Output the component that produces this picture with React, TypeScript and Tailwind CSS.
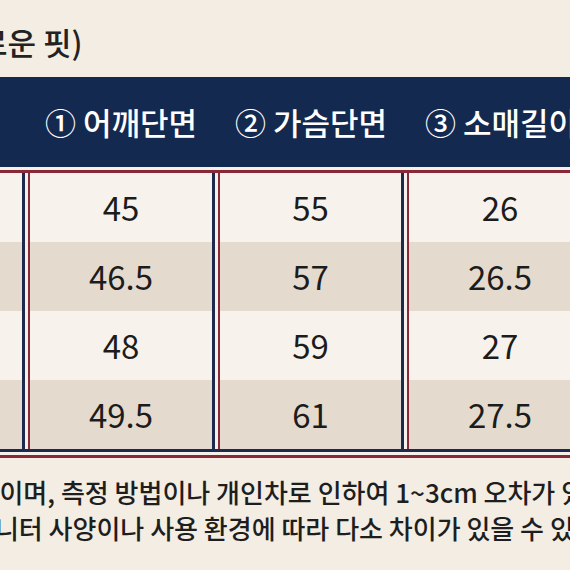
const font = { fontFamily: '"Noto Sans CJK KR", "Noto Sans", sans-serif' };

const columns = [
  { label: "① 어깨단면", values: ["45", "46.5", "48", "49.5"] },
  { label: "② 가슴단면", values: ["55", "57", "59", "61"] },
  { label: "③ 소매길이", values: ["26", "26.5", "27", "27.5"] },
];

function Separator() {
  return (
    <div className="flex h-full shrink-0">
      <div className="w-[3px] bg-[#1d2a4d]" />
      <div className="w-[3px] bg-[#f6f0ea]" />
      <div className="w-[2px] bg-[#8a2838]" />
    </div>
  );
}

function Column({ values, width }: { values: string[]; width: string }) {
  return (
    <div className={`flex flex-col shrink-0 ${width}`}>
      {values.map((v, i) => (
        <div
          key={i}
          className={`h-[69px] flex items-center justify-center text-[33px] text-[#1c1c1c] ${
            i % 2 === 0 ? "bg-[#f7f3ec]" : "bg-[#e4dbce]"
          }`}
        >
          {v}
        </div>
      ))}
    </div>
  );
}

export default function App() {
  const blank = ["", "", "", ""];
  return (
    <div className="w-[570px] h-[570px] overflow-hidden bg-[#f3ede3]" style={font}>
      <div className="h-[77px] pt-[18px] whitespace-nowrap leading-[48px]">
        <p className="ml-[-89px] text-[31px] font-medium text-[#222]">(여유로운 핏)</p>
      </div>

      <div className="h-[90px] bg-[#14294f] flex items-center whitespace-nowrap text-white text-[31px] font-medium">
        <div className="w-[30px] shrink-0" />
        {columns.map((c, i) => (
          <div key={i} className="flex shrink-0">
            <div className="w-[182px] text-center">{c.label}</div>
            <div className="w-[8px]" />
          </div>
        ))}
      </div>

      <div className="h-[3px] bg-[#f6f0ea]" />
      <div className="h-[3px] bg-[#8a2838]" />

      <div className="flex h-[276px] overflow-hidden">
        <Column values={blank} width="w-[22px]" />
        <Separator />
        <Column values={columns[0].values} width="w-[182px]" />
        <Separator />
        <Column values={columns[1].values} width="w-[181px]" />
        <Separator />
        <Column values={columns[2].values} width="w-[182px]" />
      </div>

      <div className="h-[3px] bg-[#1d2a4d]" />
      <div className="h-[3px] bg-[#f6f0ea]" />
      <div className="h-[3px] bg-[#8a2838]" />

      <div className="pt-[16px] whitespace-nowrap text-[26px] font-medium text-[#1e1e1e] leading-[36px]">
        <p className="ml-[-126px]">참고용 수치이며, 측정 방법이나 개인차로 인하여 1~3cm 오차가 있을 수 있습니다.</p>
        <p className="ml-[-29px]">모니터 사양이나 사용 환경에 따라 다소 차이가 있을 수 있습니다.</p>
      </div>
    </div>
  );
}
